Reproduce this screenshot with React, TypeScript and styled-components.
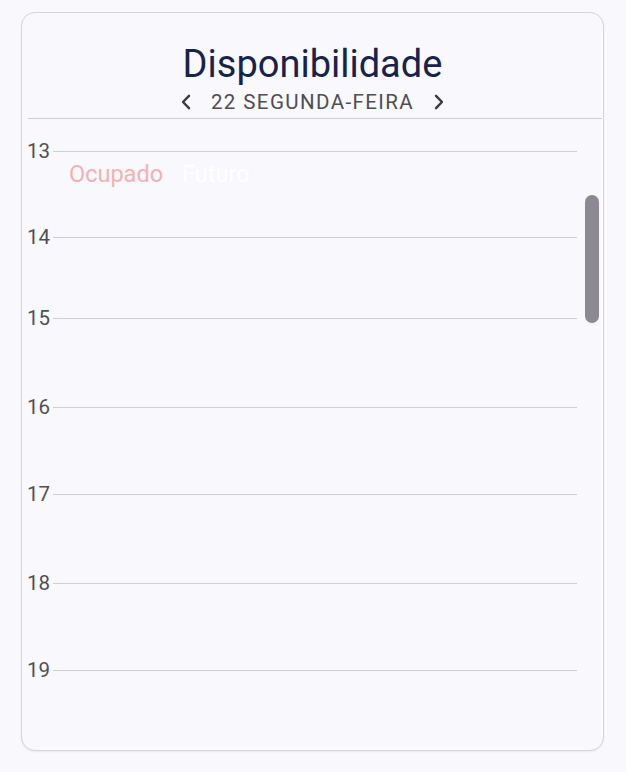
import React from "react";
import styled, { createGlobalStyle } from "styled-components";

const GlobalStyle = createGlobalStyle`
  html, body {
    margin: 0;
    padding: 0;
    background: #f8f8fd;
    font-family: Roboto, "Liberation Sans", Arial, sans-serif;
  }
  * { box-sizing: border-box; }
`;

const Page = styled.div`
  width: 626px;
  height: 772px;
  padding: 12px 22px 21px 21px;
  background: #f8f8fd;
`;

const Card = styled.section`
  position: relative;
  height: 739px;
  display: flex;
  flex-direction: column;
  border: 1px solid #d4d4db;
  border-radius: 14px;
  background: #f8f8fd;
  box-shadow: 0 1px 2px rgba(0, 0, 0, 0.06);
  overflow: hidden;
`;

const Header = styled.header`
  display: flex;
  flex-direction: column;
  align-items: center;
  padding-top: 29px;
`;

const Title = styled.h1`
  margin: 0;
  font-size: 38px;
  line-height: 44px;
  font-weight: 400;
  color: #17234a;
`;

const DateNav = styled.div`
  display: flex;
  align-items: center;
  gap: 19px;
  margin-top: 4px;
  height: 24px;
`;

const NavButton = styled.span`
  display: inline-flex;
  align-items: center;
  justify-content: center;
  width: 12px;
  height: 24px;
  color: #3a3a3a;
`;

const DateLabel = styled.span`
  font-size: 20.5px;
  line-height: 24px;
  letter-spacing: 1.4px;
  color: #4e4e52;
`;

const Divider = styled.div`
  height: 1px;
  background: #cfcfd6;
  margin: 4px 1px 0 6px;
`;

const Schedule = styled.div`
  flex: 1;
  display: flex;
  flex-direction: column;
  padding: 20px 26px 0 5px;
`;

const HourBlock = styled.div<{ $h: number }>`
  height: ${(p) => p.$h}px;
  display: flex;
  flex-direction: column;
`;

const HourRow = styled.div`
  display: flex;
  align-items: center;
  height: 24px;
`;

const HourLabel = styled.span`
  font-size: 20.5px;
  line-height: 24px;
  color: #505054;
`;

const HourLine = styled.div`
  flex: 1;
  height: 1px;
  margin-left: 3px;
  background: #cdcdd4;
`;

const Legend = styled.div`
  display: flex;
  gap: 19px;
  padding-left: 42px;
  margin-top: -2px;
`;

const LegendItem = styled.span<{ $color: string }>`
  font-size: 23.5px;
  line-height: 26px;
  color: ${(p) => p.$color};
`;

const ScrollThumb = styled.div`
  position: absolute;
  left: 563px;
  top: 182px;
  width: 14px;
  height: 128px;
  border-radius: 7px;
  background: #8d8992;
`;

const Chevron = ({ dir }: { dir: "left" | "right" }) => (
  <svg width="12" height="16" viewBox="0 0 12 16" fill="none">
    <path
      d={dir === "left" ? "M9 1.8 L3 8 L9 14.2" : "M3 1.8 L9 8 L3 14.2"}
      stroke="currentColor"
      strokeWidth="2.4"
      strokeLinecap="round"
      strokeLinejoin="round"
    />
  </svg>
);

const hours = [
  { label: "13", h: 86, legend: true },
  { label: "14", h: 81 },
  { label: "15", h: 89 },
  { label: "16", h: 87 },
  { label: "17", h: 89 },
  { label: "18", h: 87 },
  { label: "19", h: 60 },
];

export default function App() {
  return (
    <>
      <GlobalStyle />
      <Page>
        <Card>
          <Header>
            <Title>Disponibilidade</Title>
            <DateNav>
              <NavButton>
                <Chevron dir="left" />
              </NavButton>
              <DateLabel>22 SEGUNDA-FEIRA</DateLabel>
              <NavButton>
                <Chevron dir="right" />
              </NavButton>
            </DateNav>
          </Header>
          <Divider />
          <Schedule>
            {hours.map((hr) => (
              <HourBlock key={hr.label} $h={hr.h}>
                <HourRow>
                  <HourLabel>{hr.label}</HourLabel>
                  <HourLine />
                </HourRow>
                {hr.legend && (
                  <Legend>
                    <LegendItem $color="#f3b2b2">Ocupado</LegendItem>
                    <LegendItem $color="#ffffff">Futuro</LegendItem>
                  </Legend>
                )}
              </HourBlock>
            ))}
          </Schedule>
          <ScrollThumb />
        </Card>
      </Page>
    </>
  );
}
